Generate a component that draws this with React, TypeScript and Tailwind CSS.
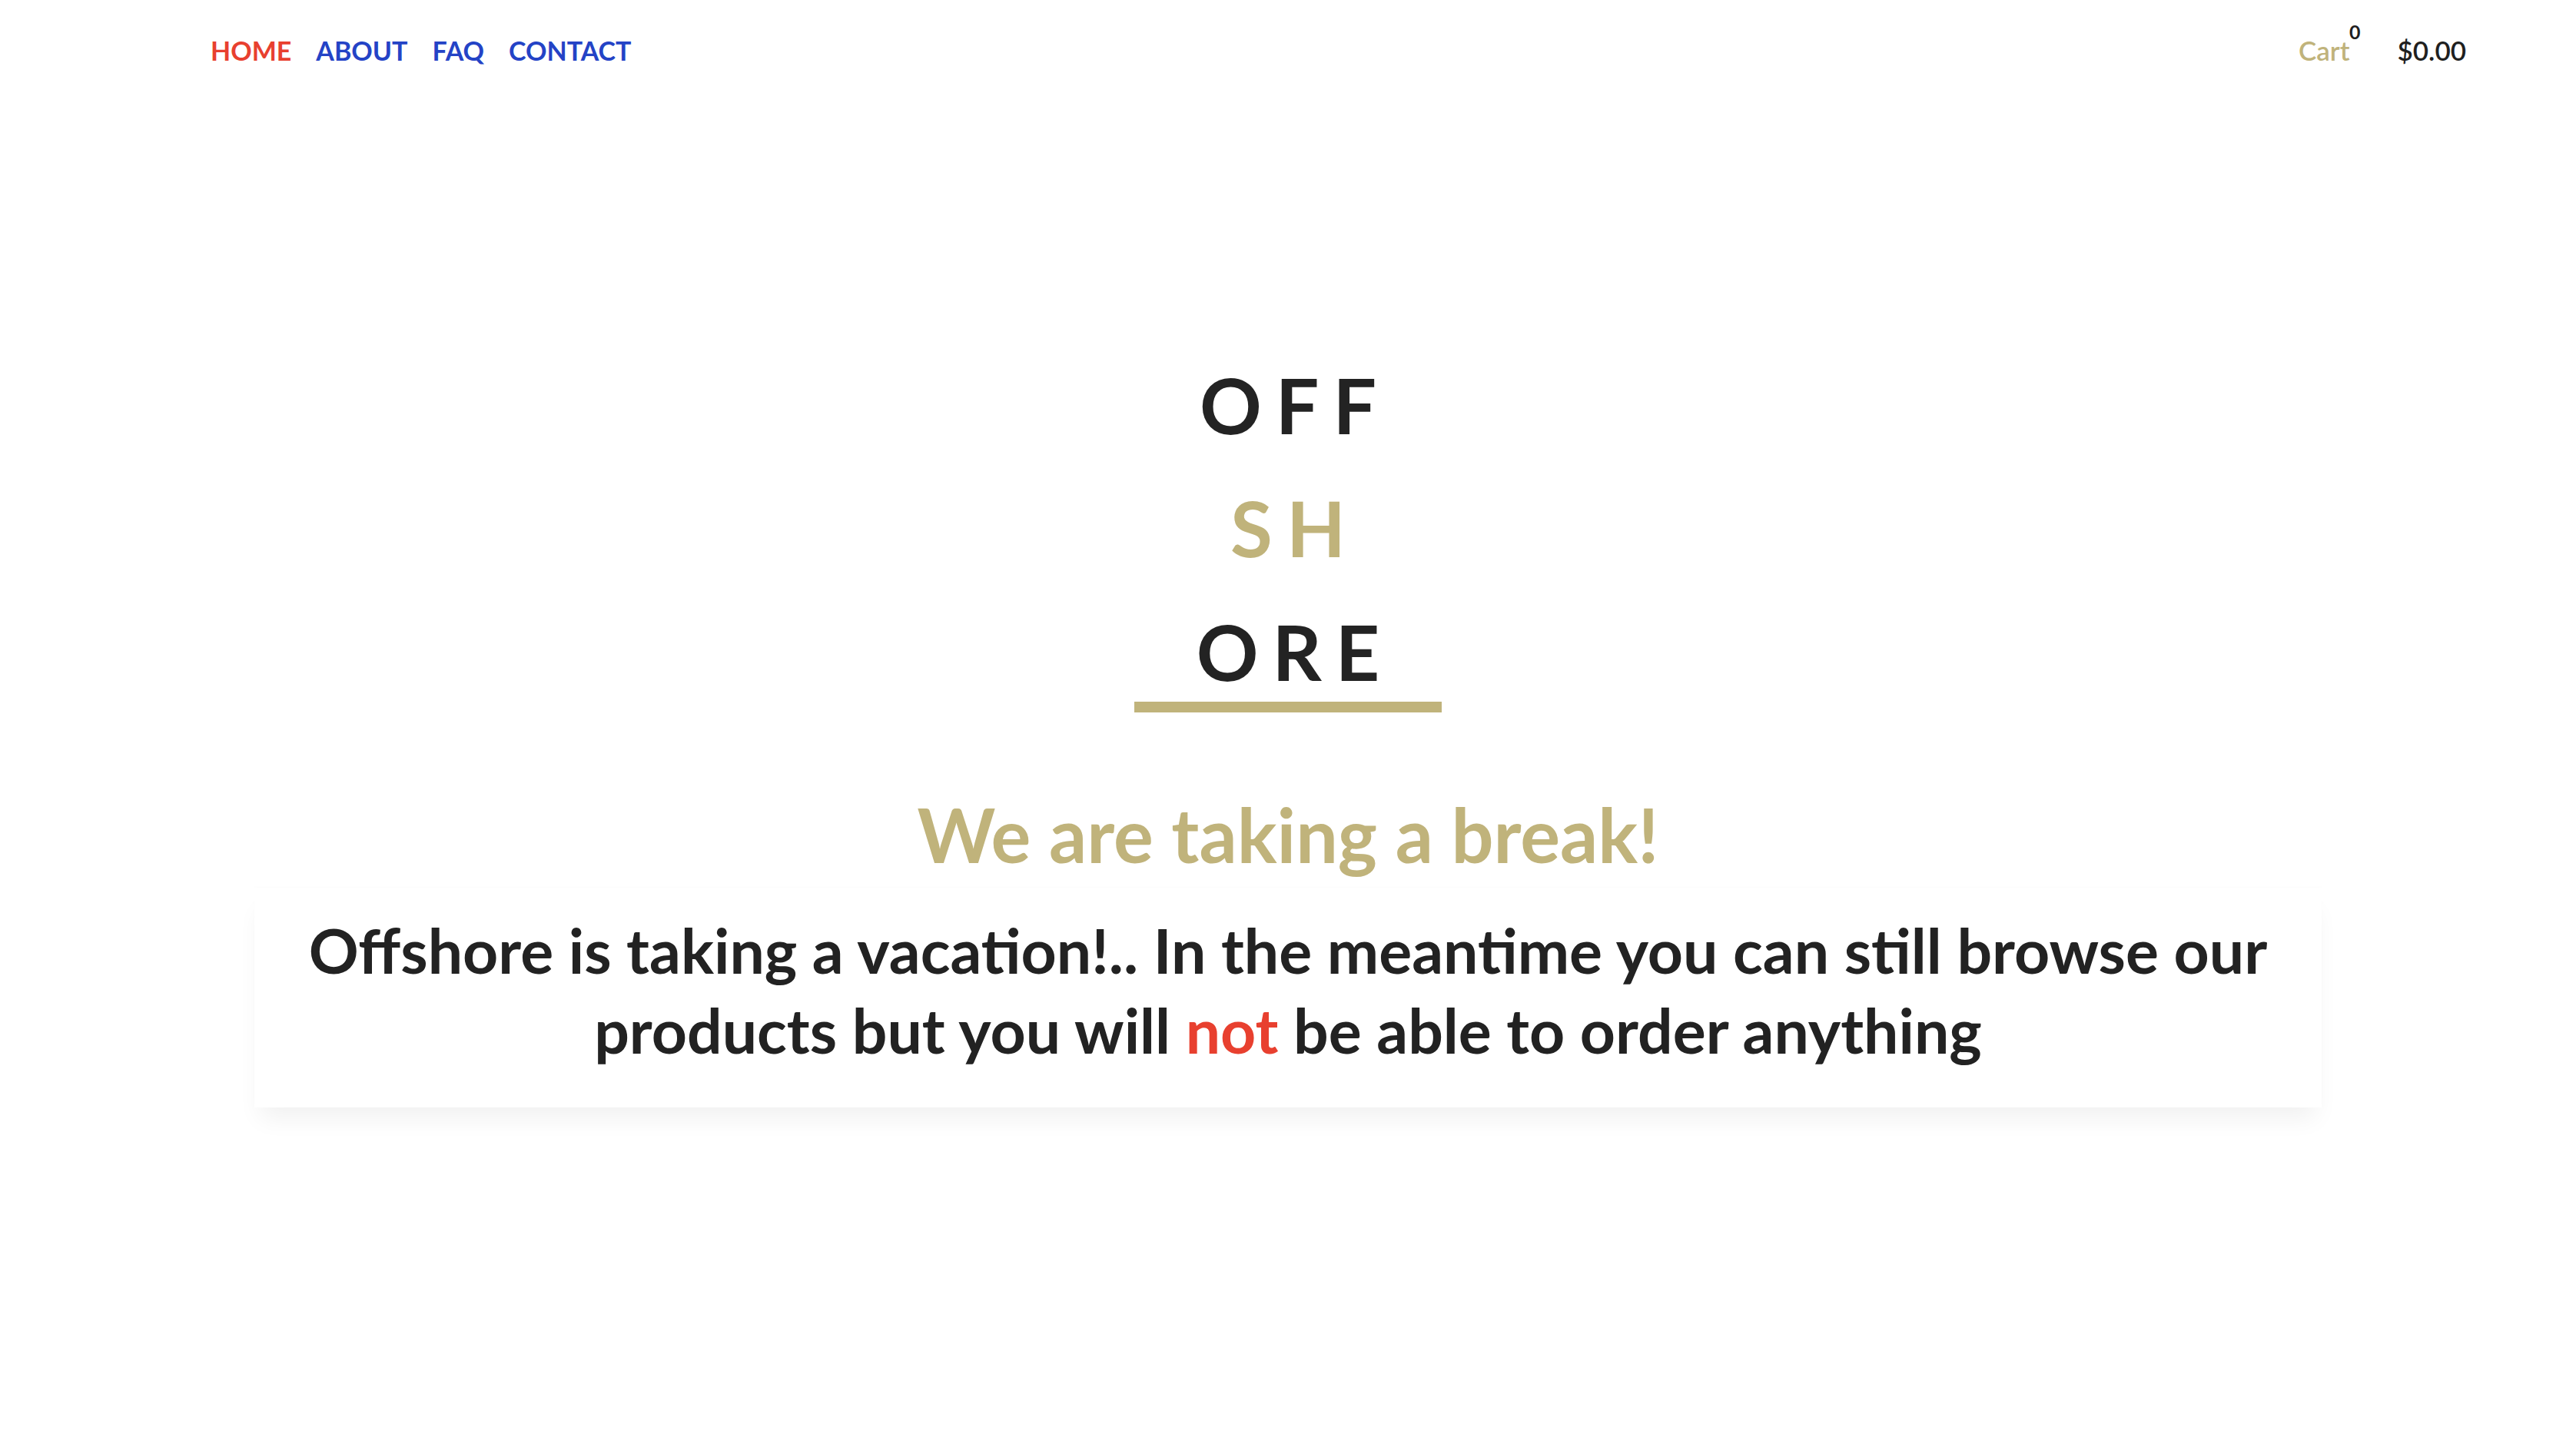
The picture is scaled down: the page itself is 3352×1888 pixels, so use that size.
const GOLD = 'text-[#c0b37b]'

const links = [
  { label: 'HOME', active: true },
  { label: 'ABOUT' },
  { label: 'FAQ' },
  { label: 'CONTACT' },
]

function Logo() {
  return (
    <div className="flex w-[400px] flex-col items-center text-center font-['Lato',sans-serif] text-[100px] font-bold leading-[160px] tracking-[0.18em] text-[#232323]">
      <span className="pl-[0.18em]">OFF</span>
      <span className={`pl-[0.18em] ${GOLD}`}>SH</span>
      <span className="w-full border-b-[14px] border-[#c0b37b] pl-[0.18em] pt-[15px] leading-[132px]">ORE</span>
    </div>
  )
}

export default function App() {
  return (
    <div className="min-h-screen bg-white font-['Lato',sans-serif]">
      <header className="flex h-[130px] items-center justify-between pl-[274px] pr-[143px]">
        <nav className="flex items-center gap-[32px] text-[34px] font-bold">
          {links.map((l) => (
            <a
              key={l.label}
              href="#"
              className={l.active ? 'text-[#e8402f]' : 'text-[#2443c6]'}
            >
              {l.label}
            </a>
          ))}
        </nav>
        <div className="flex items-center gap-[62px] text-[35px] font-semibold">
          <a href="#" className={`relative ${GOLD}`}>
            Cart
            <span className="absolute -right-[14px] -top-[16px] text-[25px] font-bold text-[#1f1f1f]">0</span>
          </a>
          <span className="text-[#1f1f1f]">$0.00</span>
        </div>
      </header>

      <main className="flex flex-col items-center pt-[316px]">
        <Logo />

        <h1 className={`mt-[99px] text-[97px] font-bold leading-[120px] ${GOLD}`}>
          We are taking a break!
        </h1>

        <div className="mt-[9px] w-[2690px] bg-white px-10 pb-[49px] pt-[29px] text-center shadow-[0_22px_30px_-8px_rgba(0,0,0,0.06),0_-1px_3px_rgba(0,0,0,0.02)]">
          <p className="flex flex-col items-center text-[80.5px] font-bold leading-[104px] text-[#222222]">
            <span>Offshore is taking a vacation!.. In the meantime you can still browse our</span>
            <span>
              products but you will <span className="text-[#e8402f]">not</span> be able to order
              anything
            </span>
          </p>
        </div>
      </main>
    </div>
  )
}
